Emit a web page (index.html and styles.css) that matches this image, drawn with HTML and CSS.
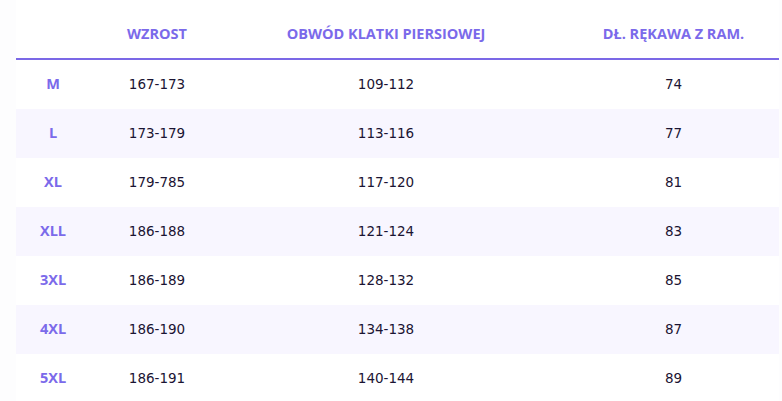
FILE: index.html
```html
<!DOCTYPE html>
<html lang="pl">
<head>
<meta charset="utf-8">
<title>Tabela rozmiarów</title>
<link rel="stylesheet" href="styles.css">
</head>
<body>
<div class="page">
  <div class="table">
    <div class="row head">
      <div class="cell"></div>
      <div class="cell">WZROST</div>
      <div class="cell">OBWÓD KLATKI PIERSIOWEJ</div>
      <div class="cell last">DŁ. RĘKAWA Z RAM.</div>
    </div>
    <div class="row">
      <div class="cell size">M</div><div class="cell">167-173</div><div class="cell">109-112</div><div class="cell last">74</div>
    </div>
    <div class="row alt">
      <div class="cell size">L</div><div class="cell">173-179</div><div class="cell">113-116</div><div class="cell last">77</div>
    </div>
    <div class="row">
      <div class="cell size">XL</div><div class="cell">179-785</div><div class="cell">117-120</div><div class="cell last">81</div>
    </div>
    <div class="row alt">
      <div class="cell size">XLL</div><div class="cell">186-188</div><div class="cell">121-124</div><div class="cell last">83</div>
    </div>
    <div class="row">
      <div class="cell size">3XL</div><div class="cell">186-189</div><div class="cell">128-132</div><div class="cell last">85</div>
    </div>
    <div class="row alt">
      <div class="cell size">4XL</div><div class="cell">186-190</div><div class="cell">134-138</div><div class="cell last">87</div>
    </div>
    <div class="row">
      <div class="cell size">5XL</div><div class="cell">186-191</div><div class="cell">140-144</div><div class="cell last">89</div>
    </div>
  </div>
</div>
</body>
</html>
```
FILE: styles.css
```css
html, body {
  margin: 0;
  padding: 0;
  background: #fdfdfe;
}
.page {
  padding-left: 16px;
  width: 763px;
}
.table {
  background: #ffffff;
}
.row {
  display: grid;
  grid-template-columns: 74px 134px 324px 231px;
  height: 49px;
  box-sizing: border-box;
  padding-bottom: 2px;
  align-items: center;
  font-family: "DejaVu Sans", Verdana, sans-serif;
  font-size: 13.5px;
  color: #1b1433;
}
.row.alt {
  background: #f8f6ff;
}
.cell {
  text-align: center;
  white-space: nowrap;
}
.cell.last {
  padding-left: 20px;
}
.head {
  height: 60px;
  padding-top: 8px;
  padding-bottom: 0;
  border-bottom: 2px solid #7b68e6;
  font-family: "Open Sans", "Noto Sans", sans-serif;
  font-weight: 700;
  font-size: 14.5px;
  color: #7b6aea;
}
.size {
  font-family: "Open Sans", "Noto Sans", sans-serif;
  font-weight: 700;
  font-size: 14.5px;
  color: #7b6aea;
}
```
